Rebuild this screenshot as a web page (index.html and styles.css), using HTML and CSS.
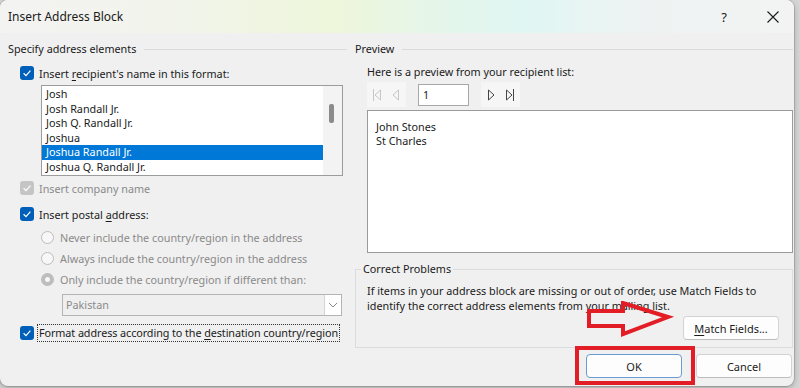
FILE: index.html
```html
<!DOCTYPE html>
<html lang="en">
<head>
    <meta charset="UTF-8">
    <title>Insert Address Block</title>
    <link rel="stylesheet" href="styles.css">
</head>
<body>
    <div class="dialog">
        <div class="titlebar">
            <span class="title">Insert Address Block</span>
            <div class="title-buttons">
                <span class="help">?</span>
                <span class="close">
                    <svg width="12" height="12" viewBox="0 0 12 12"><path d="M0.5 0.5 L11.5 11.5 M11.5 0.5 L0.5 11.5" stroke="#1b1b1b" stroke-width="1.1" fill="none"/></svg>
                </span>
            </div>
        </div>

        <div class="content">
            <!-- left: address elements -->
            <div class="col-left">
                <div class="group-head"><span>Specify address elements</span></div>

                <div class="check-row row-name">
                    <span class="check on"><svg width="14" height="14" viewBox="0 0 14 14"><path d="M3.6 7.3 L6 9.6 L10.4 4.6" stroke="#fff" stroke-width="1.2" fill="none"/></svg></span>
                    <span>Insert <u>r</u>ecipient's name in this format:</span>
                </div>

                <div class="listbox">
                    <ul>
                        <li>Josh</li>
                        <li>Josh Randall Jr.</li>
                        <li>Josh Q. Randall Jr.</li>
                        <li>Joshua</li>
                        <li class="selected">Joshua Randall Jr.</li>
                        <li>Joshua Q. Randall Jr.</li>
                    </ul>
                    <div class="scrollbar"><div class="thumb"></div></div>
                </div>

                <div class="check-row row-company disabled">
                    <span class="check off"><svg width="14" height="14" viewBox="0 0 14 14"><path d="M3.6 7.3 L6 9.6 L10.4 4.6" stroke="#fff" stroke-width="1.2" fill="none"/></svg></span>
                    <span>Insert company name</span>
                </div>

                <div class="check-row row-postal">
                    <span class="check on"><svg width="14" height="14" viewBox="0 0 14 14"><path d="M3.6 7.3 L6 9.6 L10.4 4.6" stroke="#fff" stroke-width="1.2" fill="none"/></svg></span>
                    <span>Insert postal <u>a</u>ddress:</span>
                </div>

                <div class="radio-row first"><span class="radio"></span><span>Never include the country/region in the address</span></div>
                <div class="radio-row"><span class="radio"></span><span>Always include the country/region in the address</span></div>
                <div class="radio-row"><span class="radio picked"></span><span>Only include the country/region if different than:</span></div>

                <div class="select">
                    <span class="select-value">Pakistan</span>
                    <span class="select-arrow">
                        <svg width="10" height="6" viewBox="0 0 10 6"><path d="M1 1 L5 5 L9 1" stroke="#8a8a8a" stroke-width="1" fill="none"/></svg>
                    </span>
                </div>

                <div class="check-row row-format">
                    <span class="check on"><svg width="14" height="14" viewBox="0 0 14 14"><path d="M3.6 7.3 L6 9.6 L10.4 4.6" stroke="#fff" stroke-width="1.2" fill="none"/></svg></span>
                    <span class="focus">Format address according to the <u>d</u>estination country/region</span>
                </div>
            </div>

            <!-- right: preview + problems -->
            <div class="col-right">
                <div class="group-head"><span>Preview</span></div>
                <div class="preview-label">Here is a preview from your recipient list:</div>

                <div class="nav-row">
                    <div class="nav-group">
                        <svg width="8" height="12" viewBox="0 0 8 12"><path d="M0.5 0 V12 M7.5 1 L2 6 L7.5 11 Z" stroke="#c6c6c6" stroke-width="1" fill="none"/></svg>
                        <svg width="8" height="12" viewBox="0 0 8 12"><path d="M6.5 1 L1 6 L6.5 11 Z" stroke="#c6c6c6" stroke-width="1" fill="none"/></svg>
                    </div>
                    <div class="record">1</div>
                    <div class="nav-group">
                        <svg width="8" height="12" viewBox="0 0 8 12"><path d="M1.5 1 L7 6 L1.5 11 Z" stroke="#444" stroke-width="1" fill="none"/></svg>
                        <svg width="8" height="12" viewBox="0 0 8 12"><path d="M0.5 1 L6 6 L0.5 11 Z M7.5 0 V12" stroke="#444" stroke-width="1" fill="none"/></svg>
                    </div>
                </div>

                <div class="preview-box">
                    <div>John Stones</div>
                    <div>St Charles</div>
                </div>

                <fieldset class="problems">
                    <legend>Correct Problems</legend>
                    <p>If items in your address block are missing or out of order, use Match Fields to identify the correct address elements from your mailing list.</p>
                    <div class="match-row">
                        <button class="btn"><u>M</u>atch Fields...</button>
                    </div>
                </fieldset>

                <div class="footer">
                    <button class="btn default">OK</button>
                    <button class="btn">Cancel</button>
                </div>
            </div>
        </div>
    </div>

    <!-- annotations drawn over the screenshot -->
    <svg class="annot-arrow" width="90" height="40" viewBox="0 0 90 40">
        <path d="M4 10 H38 V2 L83 16 L38 33 V25 H4 Z" stroke="#e31d25" stroke-width="4" fill="none" stroke-linejoin="miter"/>
    </svg>
    <div class="annot-box"></div>
</body>
</html>
```

FILE: styles.css
```css
* {
    box-sizing: border-box;
}
body {
    margin: 0;
    width: 800px;
    height: 388px;
    overflow: hidden;
    position: relative;
    background: #d6d6d6;
    font-family: "Noto Sans", "Open Sans", sans-serif;
    font-size: 10.8px;
    color: #1b1b1b;
}
u {
    text-decoration-thickness: 1px;
    text-underline-offset: 2px;
}
.dialog {
    width: 794px;
    height: 386px;
    background: #f0f0f0;
    border-radius: 8px;
    box-shadow: 0 0 0 1px rgba(0, 0, 0, 0.12), 0 2px 6px rgba(0, 0, 0, 0.25);
    overflow: hidden;
}

/* title bar */
.titlebar {
    height: 33px;
    display: flex;
    align-items: center;
    justify-content: space-between;
    padding-left: 8px;
    background: linear-gradient(90deg, #f3f3f2 0%, #f2f4eb 22%, #eef6db 42%, #e4f6ea 56%, #e0f6f3 66%, #edf3f2 80%, #f3f3f3 100%);
}
.title {
    font-size: 12px;
}
.title-buttons {
    display: flex;
    align-items: center;
    gap: 19px;
    margin-right: 6px;
}
.help,
.close {
    width: 30px;
    display: flex;
    justify-content: center;
    font-size: 13px;
}

/* two columns */
.content {
    display: grid;
    grid-template-columns: 339px 1fr;
    column-gap: 8px;
    padding: 8px 1px 0 8px;
}
.group-head {
    display: flex;
    align-items: center;
    gap: 8px;
    height: 16px;
    line-height: 16px;
}
.group-head::after {
    content: "";
    flex: 1;
    height: 1px;
    background: #dadada;
}

/* left column */
.check-row {
    display: flex;
    align-items: center;
    gap: 5px;
    height: 16px;
    padding-left: 12px;
    white-space: nowrap;
}
.check {
    width: 14px;
    height: 14px;
    border-radius: 3px;
    display: flex;
    flex: none;
}
.check.on {
    background: #005fb8;
}
.check.off {
    background: #c5c5c5;
}
.disabled {
    color: #8a8a8a;
}
.row-name {
    margin-top: 8px;
}
.row-company {
    margin-top: 4px;
}
.row-postal {
    margin-top: 10px;
}
.row-format {
    margin-top: 9px;
}
.focus {
    border: 1px dotted #333;
    margin-left: -2px;
    padding: 0 1px 0 1px;
    line-height: 16px;
    letter-spacing: -0.08px;
}

.listbox {
    margin: 4px 4px 0 33px;
    height: 91px;
    border: 1px solid #9c9c9c;
    background: #fff;
    display: flex;
}
.listbox ul {
    list-style: none;
    margin: 0;
    padding: 1px 0 0;
    flex: 1;
}
.listbox li {
    height: 14.6px;
    line-height: 14.6px;
    padding-left: 4px;
}
.listbox li.selected {
    background: #0078d7;
    color: #fff;
}
.scrollbar {
    width: 19px;
    background: #f3f3f3;
    padding: 18px 0 0 6px;
}
.thumb {
    width: 5px;
    height: 19px;
    border-radius: 2px;
    background: #8b8b8b;
}

.radio-row {
    display: flex;
    align-items: center;
    gap: 6px;
    height: 16px;
    padding-left: 33px;
    margin-top: 5px;
    color: #8a8a8a;
}
.radio-row.first {
    margin-top: 7px;
}
.radio {
    width: 13px;
    height: 13px;
    border-radius: 50%;
    border: 1px solid #bcbcbc;
    background: #f7f7f7;
}
.radio.picked {
    border: 4px solid #bdbdbd;
}

.select {
    margin: 7px 5px 0 54px;
    height: 22px;
    border: 1px solid #b4b4b4;
    background: #efefef;
    display: flex;
    color: #8a8a8a;
}
.select-value {
    flex: 1;
    padding-left: 3px;
    line-height: 20px;
}
.select-arrow {
    width: 17px;
    background: #fff;
    border-left: 1px solid #d4d4d4;
    display: flex;
    align-items: center;
    justify-content: center;
}

/* right column */
.preview-label {
    margin: 7px 0 0 12px;
    line-height: 16px;
}
.nav-row {
    display: flex;
    align-items: center;
    gap: 12px;
    margin: 2px 0 0 12px;
    height: 25px;
}
.nav-group {
    width: 39px;
    height: 25px;
    background: #f6f6f6;
    display: flex;
    align-items: center;
    justify-content: space-around;
}
.record {
    width: 51px;
    height: 22px;
    border: 1px solid #a8a8a8;
    background: #fff;
    padding-left: 4px;
    line-height: 20px;
}
.preview-box {
    margin: 3px 0 0 12px;
    height: 143px;
    border: 1px solid #9a9a9a;
    background: #fff;
    padding: 9px 0 0 8px;
    line-height: 14px;
}

.problems {
    margin: 8px 0 0;
    padding: 0 0 6px 5px;
    border: 1px solid #dcdcdc;
    height: 87px;
}
.problems legend {
    padding: 0 2px;
    line-height: 16px;
}
.problems p {
    margin: 6px 0 0 6px;
    line-height: 15px;
}
.match-row {
    display: flex;
    justify-content: flex-end;
    margin: 3px 13px 0 0;
}

.btn {
    width: 96px;
    height: 24px;
    background: #fdfdfd;
    border: 1px solid #d3d3d3;
    border-bottom-color: #bdbdbd;
    border-radius: 4px;
    font-family: inherit;
    font-size: 11px;
    color: #1b1b1b;
    padding: 0;
}
.btn.default {
    border-color: #6b9bd1;
}
.footer {
    display: flex;
    justify-content: flex-end;
    gap: 14px;
    margin: 6px 1px 0 0;
}

/* red markup on top */
.annot-arrow {
    position: absolute;
    left: 585px;
    top: 301px;
}
.annot-box {
    position: absolute;
    left: 575px;
    top: 346px;
    width: 120px;
    height: 39px;
    border: 4px solid #e31d25;
}
```
